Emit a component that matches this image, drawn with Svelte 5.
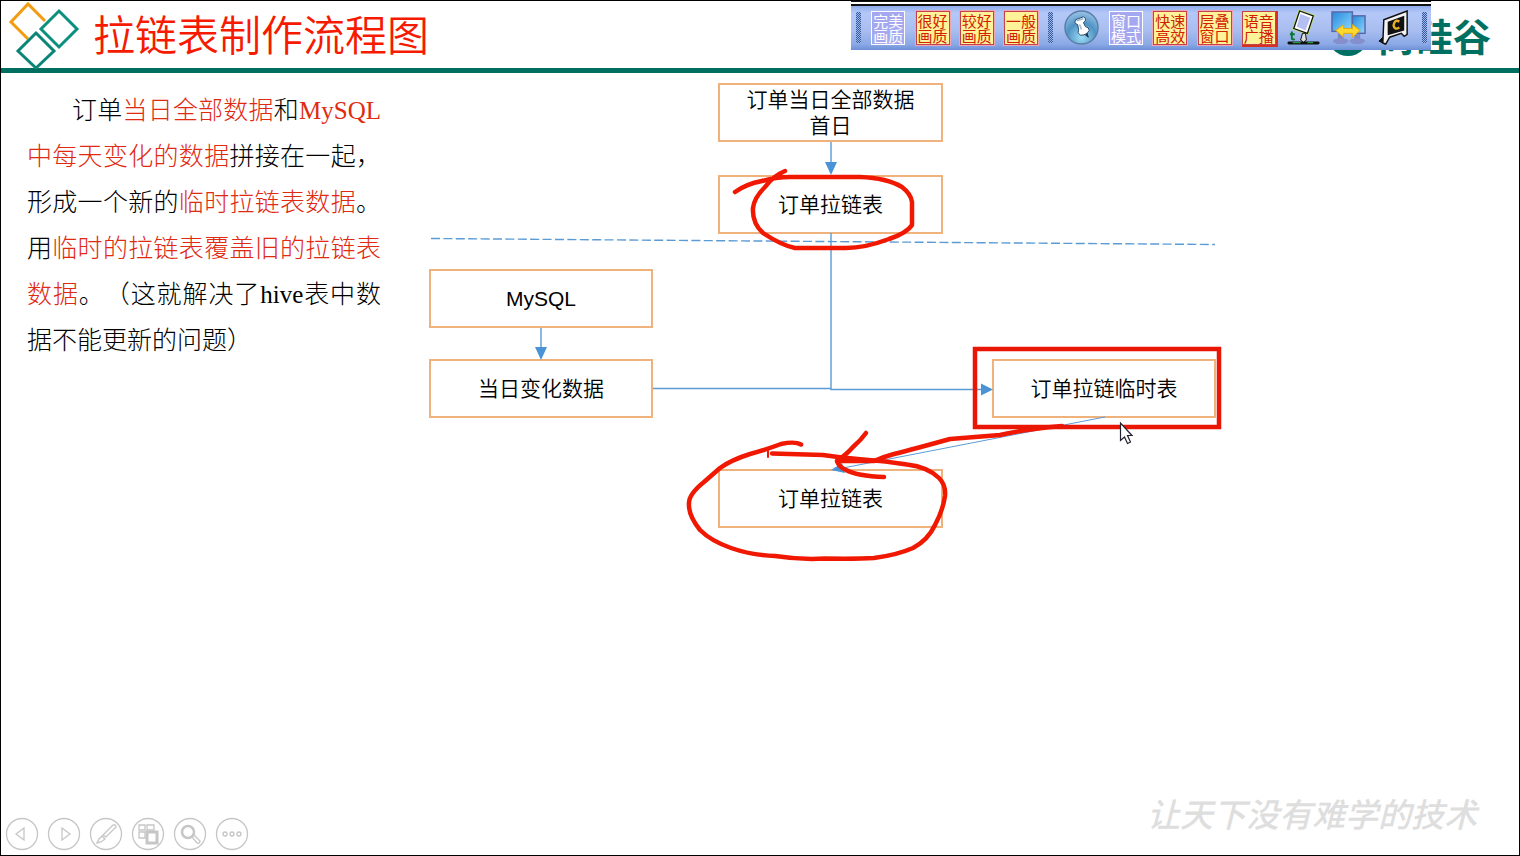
<script>
  const qualityButtons = [
    { text: '完美画质', kind: 'blue' },
    { text: '很好画质', kind: 'yellow' },
    { text: '较好画质', kind: 'yellow' },
    { text: '一般画质', kind: 'yellow' }
  ];
  const windowButtons = [
    { text: '窗口模式', kind: 'blue' },
    { text: '快速高效', kind: 'yellow' },
    { text: '层叠窗口', kind: 'yellow' },
    { text: '语音广播', kind: 'yellow raised' }
  ];
  const nodes = [
    { x: 718, y: 83, w: 225, lines: ['订单当日全部数据', '首日'] },
    { x: 718, y: 175, w: 225, lines: ['订单拉链表'] },
    { x: 429, y: 269, w: 224, lines: ['MySQL'] },
    { x: 429, y: 359, w: 224, lines: ['当日变化数据'] },
    { x: 992, y: 359, w: 224, lines: ['订单拉链临时表'] },
    { x: 718, y: 469, w: 225, lines: ['订单拉链表'] }
  ];
</script>

<div class="slide">
  <header>
    <svg class="mark" width="72" height="68" viewBox="0 0 72 68" fill="none" stroke-width="3" aria-hidden="true">
      <path d="M37 20 20 3 3 21 20 38" stroke="#f39c12" />
      <path d="M51 10 69 28 51 46 33 28Z" stroke="#0b9080" />
      <path d="M28 32 46 50 28 67 10 50Z" stroke="#0b8578" />
    </svg>
    <h1>拉链表制作流程图</h1>
    <div class="brand"><span class="disc"></span><span>尚硅谷</span></div>
  </header>

  <main>
    <p class="note">订单<em>当日全部数据</em>和<em>MySQL中每天变化的数据</em>拼接在一起，形成一个新的<em>临时拉链表数据</em>。用<em>临时的拉链表覆盖旧的拉链表数据</em>。（这就解决了hive表中数据不能更新的问题）</p>
  </main>

  <div class="canvas">
    {#each nodes as n}
      <div class="node" style="left:{n.x}px;top:{n.y}px;width:{n.w}px">
        {#each n.lines as line}<span>{line}</span>{/each}
      </div>
    {/each}
    <svg class="ink" width="1520" height="856" viewBox="0 0 1520 856" fill="none" aria-hidden="true">
      <g stroke="#5b9bd5" stroke-width="1.4">
        <path d="M431 238.500 1215 244.500" stroke-dasharray="9 3.400" />
        <path d="M831 142V164M831 233V389.500H982M541 328V349M653 388.500H831" />
        <path d="M1105 417 843 468" stroke-width="1" />
      </g>
      <g fill="#4a93d6">
        <path d="M825 162H837L831 175ZM535 347H547L541 360ZM981 383.500V395.500L993 389.500ZM831 470 842 463 845 473Z" />
      </g>
      <g stroke="#f01800" stroke-width="4.500" stroke-linecap="round" stroke-linejoin="round">
        <path d="M735 192 Q746 184 762 181 Q776 177 790 177H860Q887 178 902 187Q911 194 912 202V225Q907 233 889 239Q865 248 846 248H795Q781 245 763 233Q752 223 753 208Q754 198 765 187Q773 176 785 171" />
        <path d="M801 444.500Q795 441 781 444Q765 450 750 454Q731 460 720 468L704 482Q689 494 689 503Q688 515 700 530Q711 541 731 548Q751 555 775 556Q801 560 825 558.500Q857 559 874 558Q897 555 913 548Q928 540 935 525Q943 510 945 496Q946 485 939 478Q928 467 907 464.500Q886 461 863 459.500Q842 458 823 455L772 453.500" />
        <path d="M768 451V457" stroke-width="2" />
        <path d="M866 433Q861 440 853 447Q847 454 837 461Q839 467 846 470Q857 476 884 477" />
        <path d="M837 461H874Q883 457 894 454Q914 449 950 439Q975 437 1000 435Q1020 430 1062 426" />
      </g>
      <rect x="975" y="349" width="244" height="78" stroke="#e91505" stroke-width="4.500" />
      <path d="M1120.500 423V440.500L1124.500 437 1127.500 443.500 1130.500 442 1127.500 435.500H1132Z" fill="#fff" stroke="#223" stroke-width="1.200" />
    </svg>
  </div>

  <div class="toolbar" role="toolbar" aria-label="画质">
    <span class="grip"></span>
    {#each qualityButtons as b}<button class="word {b.kind}">{b.text}</button>{/each}
    <span class="grip"></span>
    <button class="icon" aria-label="固定">
      <svg width="35" height="35" viewBox="0 0 36 36">
        <defs>
          <radialGradient id="ball" cx=".5" cy=".8" r=".8">
            <stop offset="0" stop-color="#9ddcf5" /><stop offset=".55" stop-color="#4e93c4" /><stop offset="1" stop-color="#9cc4e8" />
          </radialGradient>
        </defs>
        <circle cx="18" cy="18" r="17" fill="url(#ball)" stroke="#5b7ea6" stroke-width="1.500" />
        <path d="M20 24 25 28 23 21" fill="#234" stroke="#234" />
        <path d="M12 10 20 7Q23 8 22 11L20 13 22 17Q26 18 26 21Q23 26 17 26Q13 24 15 20L14 15Q10 14 12 10Z" fill="#fff" stroke="#24476a" />
        <path d="M16 15 18 20M13 11 20 9" stroke="#9cb8cc" stroke-width="1.500" />
      </svg>
    </button>
    {#each windowButtons as b}<button class="word {b.kind}">{b.text}</button>{/each}
    <button class="icon" aria-label="白板">
      <svg width="35" height="35" viewBox="0 0 36 36">
        <path d="M3 34H33" stroke="#111" stroke-width="3" stroke-linecap="round" />
        <path d="M7 33.500H15M22 33.500H28" stroke="#20a03a" stroke-width="1.200" />
        <path d="M14 1 28 6 22 24 8 19Z" fill="#fff" stroke="#b8e070" stroke-width="3" />
        <path d="M14 1 28 6 22 24 8 19Z" fill="#fff" stroke="#111" stroke-width="1.300" />
        <path d="M15 4 25 8 20 21 11 17Z" fill="#b4c0f2" />
        <path d="M17 24 15 31 18 33 21 31 20 24Z" fill="#ddd" stroke="#111" />
        <path d="M6 22V29Q6 31 9 30M4 25H9" stroke="#08752c" stroke-width="2" fill="none" />
      </svg>
    </button>
    <button class="icon" aria-label="切换屏幕">
      <svg width="35" height="35" viewBox="0 0 36 36">
        <defs><linearGradient id="scr" x1="0" y1="0" x2="1" y2="1"><stop offset="0" stop-color="#2589dc" /><stop offset="1" stop-color="#8fd9ff" /></linearGradient></defs>
        <path d="M10 24V31M27 25V31" stroke="#7e88c4" stroke-width="6" />
        <ellipse cx="10" cy="32" rx="8" ry="3" fill="#858fcb" /><ellipse cx="27" cy="32" rx="8" ry="3" fill="#858fcb" />
        <rect x="1" y="2" width="21" height="20" fill="url(#scr)" stroke="#5967a8" stroke-width="1.500" />
        <rect x="22" y="6" width="13" height="18" fill="url(#scr)" stroke="#5967a8" stroke-width="1.500" />
        <path d="M5 21 13 15V19H22V15L30 21 22 28V24H13V28Z" fill="#ffd82e" stroke="#e4a80a" />
      </svg>
    </button>
    <button class="icon" aria-label="摄像">
      <svg width="35" height="35" viewBox="0 0 36 36">
        <path d="M2 32 8 26V35Z" fill="#111" stroke="#111" />
        <path d="M7 10 31 1V25L28 27 25 24 13 28 9 35 6 34Z" fill="#f4f4f8" stroke="#111" stroke-width="1.500" />
        <path d="M11 12 28 6V21L11 26Z" fill="#111" />
        <path d="M23 12Q18 9 17 16Q18 21 23 18" fill="none" stroke="#e6b020" stroke-width="2.500" />
      </svg>
    </button>
    <span class="grip"></span>
  </div>

  <footer>
    <nav aria-label="放映">
      <button aria-label="上一页"><svg viewBox="0 0 34 34"><circle cx="17" cy="17" r="15.500" /><path d="M19 11V23L11 17Z" /></svg></button>
      <button aria-label="下一页"><svg viewBox="0 0 34 34"><circle cx="17" cy="17" r="15.500" /><path d="M15 11V23L23 17Z" /></svg></button>
      <button aria-label="笔"><svg viewBox="0 0 34 34"><circle cx="17" cy="17" r="15.500" /><path d="M14 18 24 8Q27 7 27 10L17 20ZM13 19 16 22 12 25 8 26 10 22Z" /></svg></button>
      <button aria-label="所有幻灯片"><svg viewBox="0 0 34 34"><circle cx="17" cy="17" r="15.500" /><path d="M8 8H14V13H8ZM16 8H23V13H16ZM8 15H14V21H8Z" /><path d="M16 15H26V26H16Z" stroke-width="3" /></svg></button>
      <button aria-label="放大"><svg viewBox="0 0 34 34"><circle cx="17" cy="17" r="15.500" /><circle cx="15" cy="15" r="6" stroke-width="2.500" /><path d="M19 20 21 18 27 24Q27 27 24 26Z" /></svg></button>
      <button aria-label="更多"><svg viewBox="0 0 34 34"><circle cx="17" cy="17" r="15.500" /><circle cx="10" cy="17" r="2" /><circle cx="17" cy="17" r="2" /><circle cx="24" cy="17" r="2" /></svg></button>
    </nav>
    <span class="motto">让天下没有难学的技术</span>
  </footer>
</div>

<style>
  :global(body) { margin: 0; background: #fff; }
  .slide {
    position: relative;
    box-sizing: border-box;
    min-height: 100vh;
    display: flex;
    flex-direction: column;
    border: 1px solid #000;
    background: #fff;
    overflow: hidden;
    font-family: "Liberation Sans", "Noto Sans CJK SC", sans-serif;
    color: #000;
  }
  header {
    display: flex;
    align-items: flex-start;
    height: 67px;
    padding: 0 28px 0 7px;
    border-bottom: 5px solid #006e61;
  }
  .mark { flex: none; }
  h1 {
    margin: 0 auto 0 13px;
    font: 350 42px/64px "Noto Sans CJK SC", sans-serif;
    color: #f51a00;
    white-space: nowrap;
  }
  .brand {
    display: flex;
    align-items: center;
    gap: 8px;
    font: 700 38px/68px "Noto Sans CJK SC", sans-serif;
    color: #007062;
  }
  .disc { width: 42px; height: 42px; border-radius: 50%; background: #007062; }
  main { flex: 1; padding: 15px 26px; }
  .note {
    width: 354px;
    margin: 0;
    font: 300 25px/46px "Liberation Serif", "Noto Sans CJK SC", serif;
    text-indent: 45px;
    text-align: justify;
    text-spacing-trim: space-all;
  }
  em { font-style: normal; color: #e02a12; }
  .canvas { position: absolute; left: -1px; top: -1px; }
  .ink { position: absolute; left: 0; top: 0; }
  .node {
    position: absolute;
    box-sizing: border-box;
    height: 59px;
    display: flex;
    flex-direction: column;
    align-items: center;
    justify-content: center;
    border: 2px solid #efb27c;
    font-size: 21px;
    font-weight: 350;
    line-height: 26px;
  }
  .toolbar {
    position: absolute;
    left: 850px;
    top: 0;
    box-sizing: border-box;
    width: 580px;
    height: 49px;
    display: flex;
    align-items: center;
    justify-content: space-between;
    padding: 4px 4px 0 5px;
    background: linear-gradient(#111 1px, #fff 1px 3px, #111 3px 5px, #8fadec 5px, #b4c8f8 12px, #a9bdf0 60%, #8ba9e6 88%, #6d8fd6);
  }
  button { padding: 0; border: 0; background: none; }
  .grip {
    width: 5px;
    height: 31px;
    background: repeating-conic-gradient(#39599c 0 25%, #9cb8e8 0 50%) 0 0 / 2px 2px;
  }
  .word {
    box-sizing: border-box;
    width: 34px;
    height: 34px;
    border: 1px solid #c8404a;
    font: 400 15px/15px "Noto Sans CJK SC", sans-serif;
    word-break: break-all;
  }
  .yellow { background: #fff39a; color: #d02000; box-shadow: 0 0 0 1px #efa5b8; }
  .blue { background: #a5a8f0; color: #fff; border-color: #fff; }
  .raised { box-shadow: 1px 1px 0 1px #d83020; }
  .icon { width: 35px; height: 35px; }
  .icon svg { display: block; }
  footer {
    display: flex;
    align-items: flex-end;
    justify-content: space-between;
    padding: 0 42px 4px 4px;
  }
  nav { display: flex; gap: 8px; }
  nav button, nav svg { display: block; width: 34px; height: 34px; }
  nav svg { fill: none; stroke: #c6c6c6; stroke-width: 1.300; }
  .motto {
    padding-bottom: 13px;
    font: italic 500 33px/50px "Noto Sans CJK SC", sans-serif;
    color: #dedede;
  }
</style>
